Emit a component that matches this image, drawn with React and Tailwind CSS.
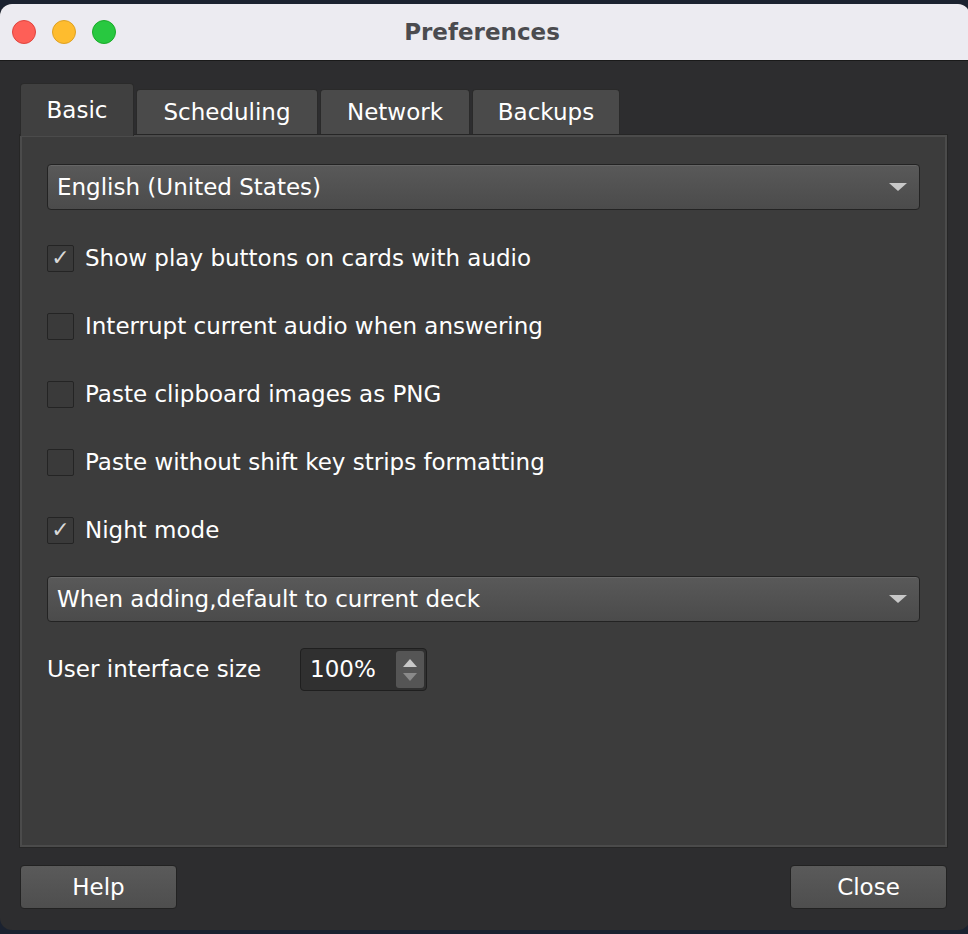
import React from 'react';

const font = { fontFamily: '"DejaVu Sans", "Liberation Sans", Arial, sans-serif' };

const Check = ({ checked, label }) => (
    <div className="flex items-center h-[68px]">
        <div className="w-[27px] h-[27px] border border-[#242424] bg-[#3a3a3a] rounded-[2px] flex items-center justify-center text-[#d8d8d8] text-[22px] font-bold leading-none">
            {checked ? '✓' : ''}
        </div>
        <span className="ml-[11px] text-[23px] text-white">{label}</span>
    </div>
);

const Combo = ({ label }) => (
    <div className="h-[46px] flex items-center justify-between px-[9px] rounded-[4px] border border-[#232323] bg-gradient-to-b from-[#595959] to-[#4b4b4b] shadow-[inset_0_1px_0_#666]">
        <span className="text-[23px] text-white">{label}</span>
        <svg width="18" height="10" viewBox="0 0 18 10" className="mr-[3px]">
            <path d="M0 1 H18 L9 9 Z" fill="#c8c8c8" />
        </svg>
    </div>
);

const Tab = ({ label, active, w }) => (
    <div
        className={`flex items-center justify-center text-[23px] text-white border border-[#2a2a2a] border-b-0 rounded-t-[4px] ${
            active ? 'h-[53px] bg-[#404040] -mb-[1px] z-10' : 'h-[46px] bg-[#4a4a4a]'
        }`}
        style={{ width: w }}
    >
        {label}
    </div>
);

const Button = ({ label }) => (
    <div className="w-[157px] h-[44px] flex items-center justify-center rounded-[4px] border border-[#222] bg-gradient-to-b from-[#5a5a5a] to-[#4e4e4e] text-[23px] text-white">
        {label}
    </div>
);

export default function App() {
    return (
        <div className="w-[968px] h-[934px] bg-[#1b2230] pt-[4px] overflow-hidden" style={font}>
            <div className="w-[970px] h-[926px] rounded-[12px] overflow-hidden bg-[#2d2d2f] flex flex-col">
                <div className="h-[57px] bg-[#ecebf1] border-b border-[#1a1a1a] flex items-center relative shrink-0">
                    <div className="flex gap-[16px] pl-[12px]">
                        <div className="w-[24px] h-[24px] rounded-full bg-[#fe5f57] border border-[#e0443e]" />
                        <div className="w-[24px] h-[24px] rounded-full bg-[#febc2e] border border-[#dea123]" />
                        <div className="w-[24px] h-[24px] rounded-full bg-[#28c840] border border-[#1aab29]" />
                    </div>
                    <div className="absolute inset-0 flex items-center justify-center pr-[6px] text-[23px] font-bold text-[#4b4b4f]">
                        Preferences
                    </div>
                </div>

                <div className="px-[20px] pt-[22px] flex flex-col">
                    <div className="flex items-end gap-[2px] w-[926px]">
                        <Tab label="Basic" active w={114} />
                        <Tab label="Scheduling" w={182} />
                        <Tab label="Network" w={150} />
                        <Tab label="Backups" w={148} />
                    </div>
                    <div className="w-[927px] h-[712px] bg-[#3c3c3c] border-2 border-[#4b4b4b] outline outline-1 outline-[#262626] px-[25px] pt-[27px]">
                        <Combo label="English (United States)" />
                        <div className="mt-[14px]">
                            <Check checked label="Show play buttons on cards with audio" />
                            <Check label="Interrupt current audio when answering" />
                            <Check label="Paste clipboard images as PNG" />
                            <Check label="Paste without shift key strips formatting" />
                            <Check checked label="Night mode" />
                        </div>
                        <div className="mt-[12px]">
                            <Combo label="When adding,default to current deck" />
                        </div>
                        <div className="flex items-center mt-[26px]">
                            <span className="text-[23px] text-white w-[253px]">User interface size</span>
                            <div className="w-[127px] h-[43px] rounded-[4px] border border-[#1f1f1f] bg-[#303030] flex">
                                <span className="flex-1 flex items-center pl-[9px] text-[23px] text-white">100%</span>
                                <div className="w-[28px] my-[2px] mr-[2px] rounded-[3px] bg-[#555] flex flex-col items-center justify-center gap-[6px]">
                                    <svg width="14" height="8" viewBox="0 0 14 8"><path d="M0 8 H14 L7 0 Z" fill="#c8c8c8" /></svg>
                                    <svg width="14" height="8" viewBox="0 0 14 8"><path d="M0 0 H14 L7 8 Z" fill="#8a8a8a" /></svg>
                                </div>
                            </div>
                        </div>
                    </div>
                    <div className="flex justify-between w-[927px] mt-[18px]">
                        <Button label="Help" />
                        <Button label="Close" />
                    </div>
                </div>
            </div>
        </div>
    );
}
